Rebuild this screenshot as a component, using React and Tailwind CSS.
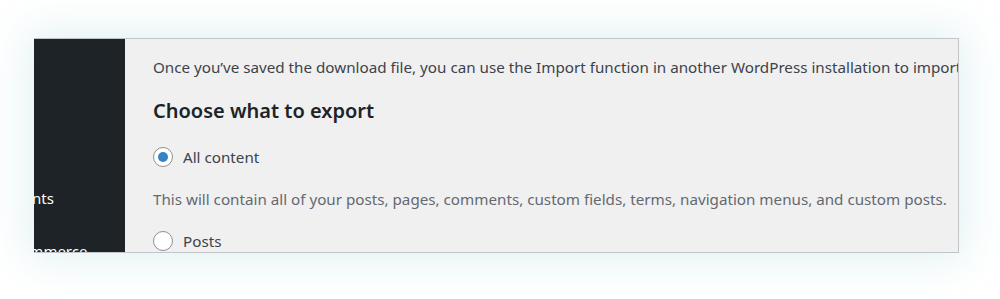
export default function App() {
  const font = { fontFamily: '"Noto Sans", "Open Sans", sans-serif' };
  return (
    <div className="w-[1000px] h-[299px] bg-white overflow-hidden pt-[38px] pl-[34px]" style={font}>
      <div className="w-[925px] h-[215px] flex shadow-[0_0_40px_6px_rgba(120,190,200,0.22)] border border-[#c3c4c7] border-l-0 bg-[#f0f0f1] overflow-hidden">
        <div className="w-[91px] shrink-0 bg-[#1d2327] overflow-hidden flex flex-col text-white text-[15px]">
          <div className="h-[146px] shrink-0"></div>
          <div className="-ml-[57px] whitespace-nowrap leading-[26px] shrink-0">Comments</div>
          <div className="h-[27px] shrink-0"></div>
          <div className="-ml-[55px] whitespace-nowrap leading-[26px] shrink-0">WooCommerce</div>
        </div>
        <div className="flex-1 overflow-hidden pl-[28px] pt-[16px] text-[15.2px]">
          <p className="whitespace-nowrap text-[#3c434a] leading-[24px]">
            Once you’ve saved the download file, you can use the Import function in another WordPress installation to import the content from this site.
          </p>
          <h2 className="mt-[18px] text-[20px] font-semibold text-[#1d2327] leading-[28px]">Choose what to export</h2>
          <label className="mt-[20px] flex items-center gap-[10px] text-[#3c434a] leading-[24px]">
            <span className="w-[20px] h-[20px] rounded-full border border-[#8c8f94] bg-white flex items-center justify-center">
              <span className="w-[10px] h-[10px] rounded-full bg-[#3582c4]"></span>
            </span>
            All content
          </label>
          <p className="mt-[18px] whitespace-nowrap text-[#646970] leading-[24px]">
            This will contain all of your posts, pages, comments, custom fields, terms, navigation menus, and custom posts.
          </p>
          <label className="mt-[18px] flex items-center gap-[10px] text-[#3c434a] leading-[24px]">
            <span className="w-[20px] h-[20px] rounded-full border border-[#8c8f94] bg-white"></span>
            Posts
          </label>
        </div>
      </div>
    </div>
  );
}
